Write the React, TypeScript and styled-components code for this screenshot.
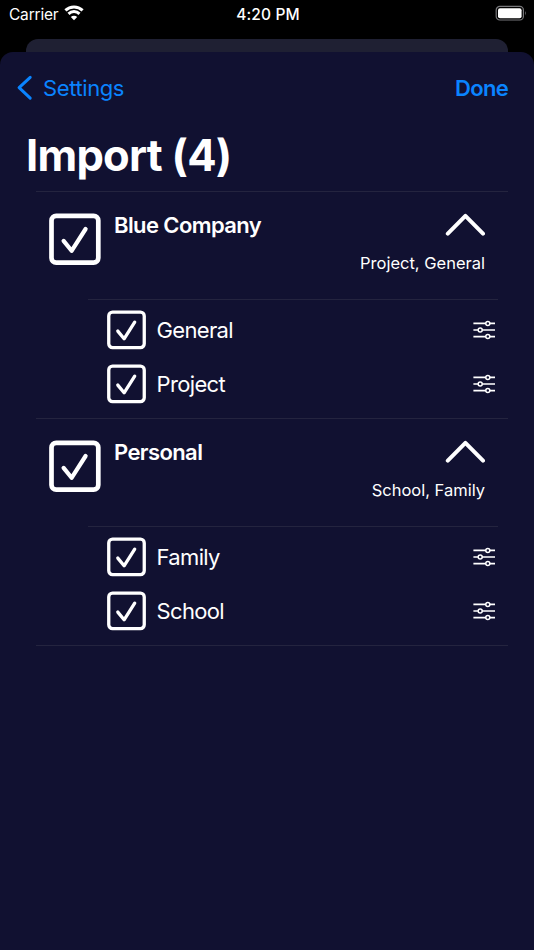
import React from "react";
import styled, { createGlobalStyle } from "styled-components";

const GlobalStyle = createGlobalStyle`
  * { box-sizing: border-box; }
  html, body { margin: 0; background: #000; }
  body { font-family: Inter, "Liberation Sans", sans-serif; color: #fff; }
  svg { display: block; flex: none; }
`;

const Screen = styled.div`
  width: 534px;
  height: 950px;
  overflow: hidden;
  display: flex;
  flex-direction: column;
  background: #000;
`;

const StatusBar = styled.header`
  height: 39px;
  flex: none;
  display: grid;
  grid-template-columns: 1fr auto 1fr;
  align-items: start;
  padding: 5px 7px 0 9px;
  line-height: 20px;
`;

const Carrier = styled.div`
  display: flex;
  gap: 6px;
  font-size: 15.5px;
  letter-spacing: -0.2px;
`;

const Clock = styled.time`
  font-size: 15.5px;
  font-weight: 500;
  letter-spacing: 0.15px;
`;

const BatterySlot = styled.div`
  display: flex;
  justify-content: flex-end;
`;

const CardBehind = styled.div`
  height: 13px;
  flex: none;
  margin: 0 26px;
  border-radius: 12px 12px 0 0;
  background: #1f2033;
`;

const Sheet = styled.main`
  flex: 1;
  border-radius: 13px 13px 0 0;
  background: #111131;
`;

const NavBar = styled.nav`
  height: 74px;
  display: flex;
  align-items: center;
  justify-content: space-between;
  padding: 0 26px 2px 16px;
`;

const NavButton = styled.button<{ $strong?: boolean }>`
  display: flex;
  align-items: center;
  gap: 10px;
  padding: 0;
  border: 0;
  background: none;
  color: #0a84ff;
  font: ${(p) => (p.$strong ? 600 : 400)} 22px/30px Inter, sans-serif;
  letter-spacing: ${(p) => (p.$strong ? "-0.7px" : "-0.4px")};
`;

const Title = styled.h1`
  margin: 0;
  height: 65px;
  padding: 4px 0 0 26px;
  font-size: 43.5px;
  font-weight: 700;
  line-height: 50px;
  letter-spacing: -0.75px;
`;

const GroupList = styled.div`
  margin: 0 26px 0 36px;
  border-bottom: 1px solid #24243f;
`;

const Group = styled.section`
  height: 226.75px;
  border-top: 1px solid #24243f;
`;

const GroupHeader = styled.div`
  height: 107px;
  display: flex;
  padding: 21px 23px 0 12px;
`;

const GroupName = styled.h2`
  flex: 1;
  margin: -1px 0 0 13px;
  font-size: 22px;
  font-weight: 600;
  line-height: 26px;
  letter-spacing: -0.6px;
`;

const GroupSide = styled.div`
  display: flex;
  flex-direction: column;
  align-items: flex-end;
  gap: 16px;
`;

const Summary = styled.div`
  font-size: 16.5px;
  line-height: 20px;
  letter-spacing: 0;
`;

const Items = styled.div`
  margin: 0 10px 0 52px;
  padding-top: 3px;
  border-top: 1px solid #24243f;
`;

const Item = styled.label`
  height: 54.3px;
  display: flex;
  align-items: center;
  padding: 0 2px 0 18px;
`;

const ItemName = styled.span`
  flex: 1;
  margin-left: 10.5px;
  font-size: 22px;
  line-height: 28px;
  letter-spacing: -0.65px;
`;

const LargeCheck = () => (
  <svg width="53" height="53" viewBox="0 0 53 53" fill="none" stroke="#fff">
    <rect x="3.5" y="2.9" width="46.8" height="46.8" rx="4.7" strokeWidth="4.7" />
    <path d="M15.6 27.9 L23.6 37.8 L37.6 16" strokeWidth="4.2" strokeLinecap="round" strokeLinejoin="round" />
  </svg>
);

const SmallCheck = () => (
  <svg width="40" height="40" viewBox="0 0 40 40" fill="none" stroke="#fff">
    <rect x="2.75" y="2.1" width="35.5" height="35.5" rx="3.8" strokeWidth="3.3" />
    <path d="M11.8 21.1 L18.1 28.8 L28.7 12.2" strokeWidth="3.3" strokeLinecap="round" strokeLinejoin="round" />
  </svg>
);

const ChevronUp = () => (
  <svg width="40" height="24" viewBox="0 0 40 24" fill="none" stroke="#fff">
    <path d="M2.8 20.7 L20.4 2.9 L38 20.7" strokeWidth="4" strokeLinecap="round" strokeLinejoin="round" />
  </svg>
);

const BackChevron = () => (
  <svg width="17" height="26" viewBox="0 0 17 26" fill="none" stroke="#0a84ff">
    <path d="M14.2 2.3 L3.1 12.7 L14.2 23.2" strokeWidth="3" strokeLinecap="round" strokeLinejoin="round" />
  </svg>
);

const Sliders = () => (
  <svg width="23" height="20" viewBox="0 0 23 20" fill="#111131" stroke="#fff" strokeWidth="1.5">
    <path d="M0.4 3.4H22M0.4 10H22M0.4 16.6H22" strokeWidth="1.7" />
    <circle cx="14.8" cy="3.4" r="2" />
    <circle cx="7.2" cy="10" r="2" />
    <circle cx="14.8" cy="16.6" r="2" />
  </svg>
);

const Wifi = () => (
  <svg width="20" height="16" viewBox="0 0 20 16" fill="none" stroke="#fff" strokeWidth="3">
    <path d="M1.4 5.4 A12.5 12.5 0 0 1 18.6 5.4" />
    <path d="M4.5 8.8 A7.9 7.9 0 0 1 15.5 8.8" />
    <path d="M10 15.3 L6.8 12 A4.5 4.5 0 0 1 13.2 12 Z" fill="#fff" stroke="none" />
  </svg>
);

const Battery = () => (
  <svg width="32" height="16" viewBox="0 0 32 16">
    <rect x="1.2" y="1.4" width="27.2" height="13.6" rx="3.6" fill="none" stroke="#77777a" strokeWidth="1.2" />
    <rect x="3" y="3.2" width="23.6" height="10" rx="2" fill="#fff" />
    <path d="M30 6 Q31.8 8.1 30 10.4 Z" fill="#77777a" />
  </svg>
);

const groups = [
  { name: "Blue Company", summary: "Project, General", items: ["General", "Project"] },
  { name: "Personal", summary: "School, Family", items: ["Family", "School"] },
];

export default function App() {
  return (
    <Screen>
      <GlobalStyle />
      <StatusBar>
        <Carrier>
          Carrier
          <Wifi />
        </Carrier>
        <Clock>4:20 PM</Clock>
        <BatterySlot>
          <Battery />
        </BatterySlot>
      </StatusBar>
      <CardBehind />
      <Sheet>
        <NavBar>
          <NavButton>
            <BackChevron />
            Settings
          </NavButton>
          <NavButton $strong>Done</NavButton>
        </NavBar>
        <Title>Import (4)</Title>
        <GroupList>
          {groups.map((group) => (
            <Group key={group.name}>
              <GroupHeader>
                <LargeCheck />
                <GroupName>{group.name}</GroupName>
                <GroupSide>
                  <ChevronUp />
                  <Summary>{group.summary}</Summary>
                </GroupSide>
              </GroupHeader>
              <Items>
                {group.items.map((item) => (
                  <Item key={item}>
                    <SmallCheck />
                    <ItemName>{item}</ItemName>
                    <Sliders />
                  </Item>
                ))}
              </Items>
            </Group>
          ))}
        </GroupList>
      </Sheet>
    </Screen>
  );
}
